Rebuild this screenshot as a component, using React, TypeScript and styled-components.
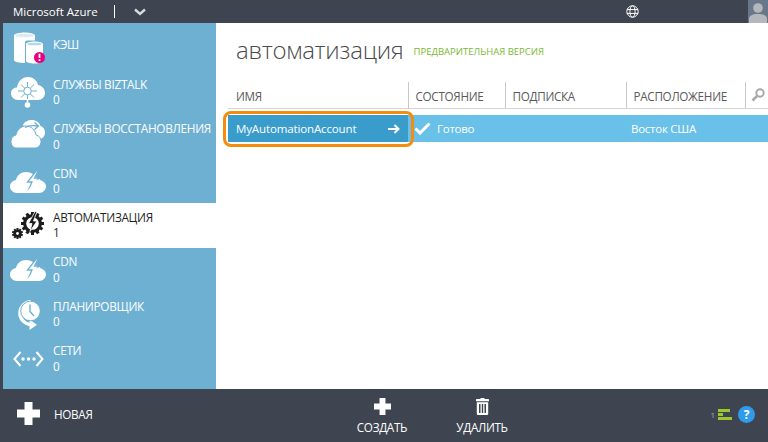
import React from 'react';
import styled, { createGlobalStyle } from 'styled-components';

const GlobalStyle = createGlobalStyle`
  html, body {
    margin: 0;
    padding: 0;
    height: 100%;
    overflow: hidden;
    background: #fff;
    font-family: "Open Sans", "Liberation Sans", sans-serif;
  }
`;

const Page = styled.div`
  width: 768px;
  height: 442px;
  display: flex;
  flex-direction: column;
  background: #fff;
`;

const TopBar = styled.header`
  height: 23px;
  flex: none;
  display: flex;
  align-items: center;
  background: #3e4551;
  color: #fff;
  padding-left: 13px;
`;

const Brand = styled.span`
  font-size: 11.5px;
`;

const BrandDivider = styled.span`
  width: 1px;
  height: 13px;
  background: #fff;
  margin: 0 19px 0 16px;
`;

const GlobeWrap = styled.span`
  margin-left: 480px;
  display: flex;
`;

const Avatar = styled.span`
  margin-left: auto;
  width: 20px;
  height: 23px;
  background: #69778a;
  display: flex;
`;

const Middle = styled.div`
  flex: 1;
  display: flex;
  min-height: 0;
`;

const Sidebar = styled.nav`
  width: 213px;
  flex: none;
  margin-left: 3px;
  padding-top: 2.5px;
  box-sizing: border-box;
  background: #6eb0d2;
  box-shadow: -3px 0 0 #3e4551;
`;

const NavRow = styled.div<{ $active?: boolean }>`
  height: 44.45px;
  display: flex;
  align-items: center;
  background: ${p => (p.$active ? '#fff' : 'transparent')};
  color: ${p => (p.$active ? '#1f1f1f' : '#fff')};
`;

const NavIcon = styled.span`
  width: 50px;
  flex: none;
  display: flex;
  justify-content: center;
  align-items: center;
`;

const NavText = styled.div<{ $single?: boolean }>`
  font-size: 11.8px;
  line-height: 15.5px;
  letter-spacing: -0.3px;
  white-space: nowrap;
  margin-bottom: ${p => (p.$single ? '5px' : '0')};
`;

const Main = styled.main`
  flex: 1;
  padding-left: 12px;
  display: flex;
  flex-direction: column;
`;

const TitleRow = styled.div`
  height: 59px;
  display: flex;
  align-items: center;
  padding: 0 0 6px 8px;
  box-sizing: border-box;
  gap: 10px;
`;

const Title = styled.h1`
  margin: 0;
  font-size: 24px;
  font-weight: 300;
  color: #4a4a4a;
  letter-spacing: -0.2px;
`;

const Preview = styled.span`
  font-size: 9.5px;
  color: #7ab733;
  margin-top: 3px;
`;

const tableColumns = '180px 97px 121px 119px 23px';

const HeaderRow = styled.div`
  display: grid;
  grid-template-columns: ${tableColumns};
  height: 26px;
  border-bottom: 1px solid #d4d4d4;
`;

const HeaderCell = styled.div<{ $first?: boolean }>`
  display: flex;
  align-items: center;
  padding-top: 2px;
  box-sizing: border-box;
  font-size: 11.7px;
  letter-spacing: -0.3px;
  color: #5a5a5a;
  padding-left: ${p => (p.$first ? '8px' : '6.5px')};
  border-left: ${p => (p.$first ? 'none' : '1px solid #c8c8c8')};
`;

const SearchCell = styled(HeaderCell)`
  padding-left: 5px;
  padding-top: 0;
`;

const DataRow = styled.div`
  display: grid;
  grid-template-columns: ${tableColumns};
  height: 27px;
  margin-top: 6px;
  background: #69c0e8;
  color: #fff;
  font-size: 11.5px;
  letter-spacing: -0.25px;
`;

const DataCell = styled.div`
  display: flex;
  align-items: center;
  padding-left: 5px;
  gap: 6px;
`;

const SelectedCell = styled.div`
  position: relative;
  display: flex;
  align-items: center;
  justify-content: space-between;
  background: #3a9ccb;
  padding: 0 8px 0 8px;
  font-size: 11.5px;
  letter-spacing: -0.13px;

  &::after {
    content: '';
    position: absolute;
    inset: -4px -6px -5px -5px;
    border: 3px solid #f58c0c;
    border-radius: 8px;
  }
`;

const BottomBar = styled.footer`
  height: 53px;
  flex: none;
  display: flex;
  align-items: center;
  background: #3e4551;
  color: #fff;
`;

const NewButton = styled.div`
  width: 216px;
  flex: none;
  display: flex;
  align-items: center;
  gap: 14px;
  padding: 0 0 4px 17px;
  box-sizing: border-box;
  font-size: 11.7px;
  letter-spacing: -0.3px;
`;

const Actions = styled.div`
  display: flex;
  margin-left: 116px;
`;

const ActionButton = styled.div`
  width: 100px;
  display: flex;
  flex-direction: column;
  align-items: center;
  gap: 5px;
  font-size: 11.7px;
  line-height: 14px;
  letter-spacing: -0.3px;
`;

const Status = styled.div`
  margin-left: auto;
  display: flex;
  align-items: center;
  padding: 0 13px 3px 0;
`;

const StatusCount = styled.span`
  font-size: 8px;
  color: #a9adb3;
  margin-right: 3px;
`;

const HelpBadge = styled.span`
  width: 17px;
  height: 17px;
  border-radius: 50%;
  background: #2f9bea;
  margin-left: 6px;
  display: flex;
  align-items: center;
  justify-content: center;
  font-size: 12px;
  font-weight: 700;
`;

const sidebarBlue = '#6eb0d2';

const Chevron = () => (
  <svg width="12" height="8" viewBox="0 0 12 8">
    <path d="M1 1.500 6 6 11 1.500" fill="none" stroke="#d8dade" strokeWidth="2.400" />
  </svg>
);

const Globe = () => (
  <svg width="13" height="13" viewBox="0 0 13 13" fill="none" stroke="#fff" strokeWidth="1">
    <circle cx="6.500" cy="6.500" r="5.700" />
    <ellipse cx="6.500" cy="6.500" rx="2.600" ry="5.700" />
    <path d="M1 4.600H12M1 8.400H12" />
  </svg>
);

const AvatarIcon = () => (
  <svg width="20" height="23" viewBox="0 0 20 23" fill="#b5b8bb">
    <circle cx="10" cy="8" r="4.800" />
    <path d="M1 23v-4c0-3 3-5 9-5s9 2 9 5v4z" />
  </svg>
);

const CacheIcon = () => (
  <svg width="34" height="32" viewBox="0 0 34 32">
    <path d="M3 3.500C3 1.500 9 .5 13.500 .5S24 1.500 24 3.500V8.500H16c-1 0-2 .8-2 2V31C8 31 3 30 3 28z" fill="#fff" />
    <ellipse cx="13.500" cy="3.500" rx="9.500" ry="1.800" fill={sidebarBlue} opacity=".25" />
    <path d="M15 12c0-1.500 4-2.500 8.500-2.500S32 10.500 32 12v17c0 1.500-4 2.500-8.500 2.500S15 30.500 15 29z" fill="#fff" />
    <ellipse cx="23.500" cy="12" rx="7.500" ry="1.300" fill={sidebarBlue} opacity=".5" />
    <circle cx="28.500" cy="25.500" r="5.500" fill="#e6007e" />
    <path d="M28.500 21.800v4.200M28.500 27.300v1.700" stroke="#fff" strokeWidth="1.800" />
  </svg>
);

const BizTalkIcon = () => (
  <svg width="34" height="31" viewBox="0 0 34 31">
    <path d="M7 23C3 23 0 20 0 16.500 0 13 2.500 10.500 6 10.500 7 4.500 11 0 17 0c5 0 9 3.500 10 8 4 .5 7 4 7 8s-3 7-7 7z" fill="#fff" />
    <g stroke={sidebarBlue} strokeWidth="1" fill="none">
      <circle cx="16.500" cy="14" r="3.800" />
      <path d="M16.500 10V5M16.500 18v5M12.500 14H7M20.500 14H26M13.700 11.200 10 7.500M19.300 11.200 23 7.500M13.700 16.800 10 20.500M19.300 16.800 23 20.500" />
    </g>
    <path d="M15.700 22h1.600v5h-1.600z" fill="#fff" />
    <circle cx="16.500" cy="28" r="2.800" fill="#fff" />
  </svg>
);

const RecoveryIcon = () => (
  <svg width="34" height="33" viewBox="0 0 34 33">
    <path d="M12 5C13 2 17 0 21 0c4 0 7.500 2.500 8.500 6 3 1 4.500 3.500 4.500 6.500S32 19 28 19H20z" fill="#fff" />
    <path d="M5.500 28C2 28 0 25 0 21.500S2 15.500 5 15C6 10 10 6 15 6s9 3.500 10 9c3 .5 5 3 5 6.500S27.500 28 24 28z" fill="#fff" stroke={sidebarBlue} strokeWidth="1" />
    <path d="M14 7.500C17 5.500 21 5 27 6M23.500 2.500 27.500 6 23.500 9.500" fill="none" stroke={sidebarBlue} strokeWidth="1.300" />
  </svg>
);

const CdnIcon = () => (
  <svg width="36" height="23" viewBox="0 0 36 23">
    <path d="M7 23C3 23 0 20 0 16.500S3 10.500 6 10C7 5 11 2 16 2c5 0 10 3 12 8 5 0 8 3 8 6.500S33 23 29 23z" fill="#fff" />
    <path d="M27 0 17.500 12H22L18 21 29.500 8H24.500L28.500 0z" fill="#fff" stroke={sidebarBlue} strokeWidth="1.300" />
    <path d="M16 23l3-4 6-8 5-2 1 5-1 9z" fill="#fff" />
  </svg>
);

const gearTeeth = (cx: number, cy: number, r: number, w: number, count: number) =>
  Array.from({ length: count }, (_, i) => (
    <rect
      key={i}
      x={cx - w / 2}
      y={cy - r}
      width={w}
      height={r * 2}
      transform={`rotate(${(i * 180) / count} ${cx} ${cy})`}
    />
  ));

const AutomationIcon = () => (
  <svg width="32" height="28" viewBox="0 0 32 28" fill="#1c1c1c">
    {gearTeeth(20.500, 12.500, 11.500, 3, 6)}
    <circle cx="20.500" cy="12.500" r="9.500" />
    <circle cx="20.500" cy="12.500" r="6.300" fill="#fff" />
    <path d="M23 .5 16.500 12.500h3.500l-2 8 7-10.500h-3.500L25 .5z" fill="#1c1c1c" stroke="#fff" strokeWidth=".8" />
    {gearTeeth(5.500, 22.500, 5.500, 2, 5)}
    <circle cx="5.500" cy="22.500" r="4" />
    <circle cx="5.500" cy="22.500" r="1.400" fill="#fff" />
  </svg>
);

const SchedulerIcon = () => (
  <svg width="24" height="31" viewBox="0 0 24 31">
    <path d="M15 2.600A11.500 11.500 0 0 0 14 25.500" fill="none" stroke="#fff" strokeWidth="3.400" />
    <path d="M13.500 20.500 21 25.800 13.500 31z" fill="#fff" />
    <circle cx="14.500" cy="12" r="9.800" fill="#fff" stroke={sidebarBlue} strokeWidth="1" />
    <path d="M14 5.500v7l4 4.500" fill="none" stroke={sidebarBlue} strokeWidth="1.400" />
  </svg>
);

const NetworkIcon = () => (
  <svg width="31" height="16" viewBox="0 0 31 16">
    <path d="M7.500 1 1.500 8l6 7M23.500 1l6 7-6 7" fill="none" stroke="#fff" strokeWidth="2" />
    <circle cx="10" cy="8" r="1.700" fill="#fff" />
    <circle cx="15.500" cy="8" r="1.700" fill="#fff" />
    <circle cx="21" cy="8" r="1.700" fill="#fff" />
  </svg>
);

const PlusIcon = ({ size }: { size: number }) => (
  <svg width={size} height={size} viewBox="0 0 23 23" fill="#fff">
    <path d="M7.500 0h8v7.500H23v8h-7.500V23h-8v-7.500H0v-8h7.500z" />
  </svg>
);

const TrashIcon = () => (
  <svg width="13" height="17" viewBox="0 0 13 17" fill="#fff">
    <path d="M4.500 0h4v1h3.500c.6 0 1 .4 1 1v1.300H0V2c0-.6.4-1 1-1h3.500z" />
    <path d="M.8 4.300h11.400V15.500c0 1-.5 1.500-1.500 1.500H2.300c-1 0-1.500-.5-1.500-1.500zM3 6v9h1.500V6zM5.800 6v9h1.400V6zM8.500 6v9H10V6z" fillRule="evenodd" />
  </svg>
);

const CheckMark = styled.svg`
  margin-left: 1px;
`;

const CheckIcon = () => (
  <CheckMark width="17" height="13" viewBox="0 0 17 13">
    <path d="M1.500 6.500 6 11 15.500 1.500" fill="none" stroke="#fff" strokeWidth="3" />
  </CheckMark>
);

const ArrowIcon = () => (
  <svg width="12" height="10" viewBox="0 0 12 10">
    <path d="M0 5h10M6.500 1 10.500 5 6.500 9" fill="none" stroke="#fff" strokeWidth="2" />
  </svg>
);

const SearchIcon = () => (
  <svg width="14" height="14" viewBox="0 0 14 14" fill="none" stroke="#a8a8a8">
    <circle cx="9" cy="5" r="3.700" strokeWidth="2" />
    <path d="M6.200 7.800 1.500 12.500" strokeWidth="2.600" />
  </svg>
);

const QueueIcon = () => (
  <svg width="14" height="11" viewBox="0 0 14 11" fill="#9bc82f">
    <path d="M0 0h12v3H0zM0 4h5v3H0zM0 8h14v3H0z" />
  </svg>
);

const navItems = [
  { label: 'КЭШ', icon: <CacheIcon /> },
  { label: 'СЛУЖБЫ BIZTALK', count: 0, icon: <BizTalkIcon /> },
  { label: 'СЛУЖБЫ ВОССТАНОВЛЕНИЯ', count: 0, icon: <RecoveryIcon /> },
  { label: 'CDN', count: 0, icon: <CdnIcon /> },
  { label: 'АВТОМАТИЗАЦИЯ', count: 1, icon: <AutomationIcon />, active: true },
  { label: 'CDN', count: 0, icon: <CdnIcon /> },
  { label: 'ПЛАНИРОВЩИК', count: 0, icon: <SchedulerIcon /> },
  { label: 'СЕТИ', count: 0, icon: <NetworkIcon /> },
];

const App: React.FC = () => (
  <Page>
    <GlobalStyle />
    <TopBar>
      <Brand>Microsoft Azure</Brand>
      <BrandDivider />
      <Chevron />
      <GlobeWrap>
        <Globe />
      </GlobeWrap>
      <Avatar>
        <AvatarIcon />
      </Avatar>
    </TopBar>
    <Middle>
      <Sidebar>
        {navItems.map((item, index) => (
          <NavRow key={index} $active={item.active}>
            <NavIcon>{item.icon}</NavIcon>
            <NavText $single={item.count === undefined}>
              <div>{item.label}</div>
              {item.count !== undefined && <div>{item.count}</div>}
            </NavText>
          </NavRow>
        ))}
      </Sidebar>
      <Main>
        <TitleRow>
          <Title>автоматизация</Title>
          <Preview>ПРЕДВАРИТЕЛЬНАЯ ВЕРСИЯ</Preview>
        </TitleRow>
        <HeaderRow>
          <HeaderCell $first>ИМЯ</HeaderCell>
          <HeaderCell>СОСТОЯНИЕ</HeaderCell>
          <HeaderCell>ПОДПИСКА</HeaderCell>
          <HeaderCell>РАСПОЛОЖЕНИЕ</HeaderCell>
          <SearchCell>
            <SearchIcon />
          </SearchCell>
        </HeaderRow>
        <DataRow>
          <SelectedCell>
            MyAutomationAccount
            <ArrowIcon />
          </SelectedCell>
          <DataCell>
            <CheckIcon />
            Готово
          </DataCell>
          <DataCell />
          <DataCell>Восток США</DataCell>
          <DataCell />
        </DataRow>
      </Main>
    </Middle>
    <BottomBar>
      <NewButton>
        <PlusIcon size={23} />
        НОВАЯ
      </NewButton>
      <Actions>
        <ActionButton>
          <PlusIcon size={17} />
          СОЗДАТЬ
        </ActionButton>
        <ActionButton>
          <TrashIcon />
          УДАЛИТЬ
        </ActionButton>
      </Actions>
      <Status>
        <StatusCount>1</StatusCount>
        <QueueIcon />
        <HelpBadge>?</HelpBadge>
      </Status>
    </BottomBar>
  </Page>
);

export default App;
